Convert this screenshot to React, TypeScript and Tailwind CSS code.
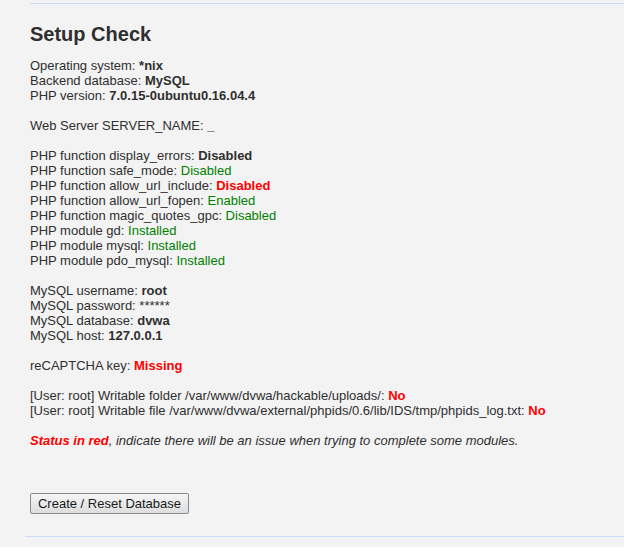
import React from 'react';

const ok = 'text-[#008000]';
const bad = 'text-[#ff0000] font-bold';

export default function App() {
  const Line = ({ children }: { children?: React.ReactNode }) => (
    <div className="h-[15px] whitespace-nowrap">{children}</div>
  );

  return (
    <div className="w-[624px] h-[547px] bg-[#f3f3f3] overflow-hidden text-[#2f2f2f] font-['Liberation_Sans',Arial,sans-serif] text-[13px] leading-[15px]">
      <div className="pt-[3px] pl-[30px]">
        <div className="h-px bg-[#c9dcfb]" />
      </div>

      <div className="pl-[30px]">
        <h1 className="mt-[18px] text-[20px] leading-[24px] font-bold text-[#2f2f2f]">Setup Check</h1>

        <div className="mt-[12px]">
          <Line>Operating system: <b>*nix</b></Line>
          <Line>Backend database: <b>MySQL</b></Line>
          <Line>PHP version: <b>7.0.15-0ubuntu0.16.04.4</b></Line>
          <Line />
          <Line>Web Server SERVER_NAME: <b>_</b></Line>
          <Line />
          <Line>PHP function display_errors: <b>Disabled</b></Line>
          <Line>PHP function safe_mode: <span className={ok}>Disabled</span></Line>
          <Line>PHP function allow_url_include: <span className={bad}>Disabled</span></Line>
          <Line>PHP function allow_url_fopen: <span className={ok}>Enabled</span></Line>
          <Line>PHP function magic_quotes_gpc: <span className={ok}>Disabled</span></Line>
          <Line>PHP module gd: <span className={ok}>Installed</span></Line>
          <Line>PHP module mysql: <span className={ok}>Installed</span></Line>
          <Line>PHP module pdo_mysql: <span className={ok}>Installed</span></Line>
          <Line />
          <Line>MySQL username: <b>root</b></Line>
          <Line>MySQL password: ******</Line>
          <Line>MySQL database: <b>dvwa</b></Line>
          <Line>MySQL host: <b>127.0.0.1</b></Line>
          <Line />
          <Line>reCAPTCHA key: <span className={bad}>Missing</span></Line>
          <Line />
          <Line>[User: root] Writable folder /var/www/dvwa/hackable/uploads/: <span className={bad}>No</span></Line>
          <Line>[User: root] Writable file /var/www/dvwa/external/phpids/0.6/lib/IDS/tmp/phpids_log.txt: <span className={bad}>No</span></Line>
          <Line />
          <Line>
            <i><span className={bad}>Status in red</span>, indicate there will be an issue when trying to complete some modules.</i>
          </Line>
        </div>

        <button className="mt-[45px] h-[21px] w-[159px] border border-[#8a8a8a] rounded-[2px] bg-gradient-to-b from-[#f6f6f6] to-[#dddddd] text-[13px] text-[#1a1a1a] leading-[19px]">
          Create / Reset Database
        </button>
      </div>

      <div className="mt-[22px] pl-[25px]">
        <div className="h-px bg-[#c9dcfb]" />
      </div>
    </div>
  );
}
